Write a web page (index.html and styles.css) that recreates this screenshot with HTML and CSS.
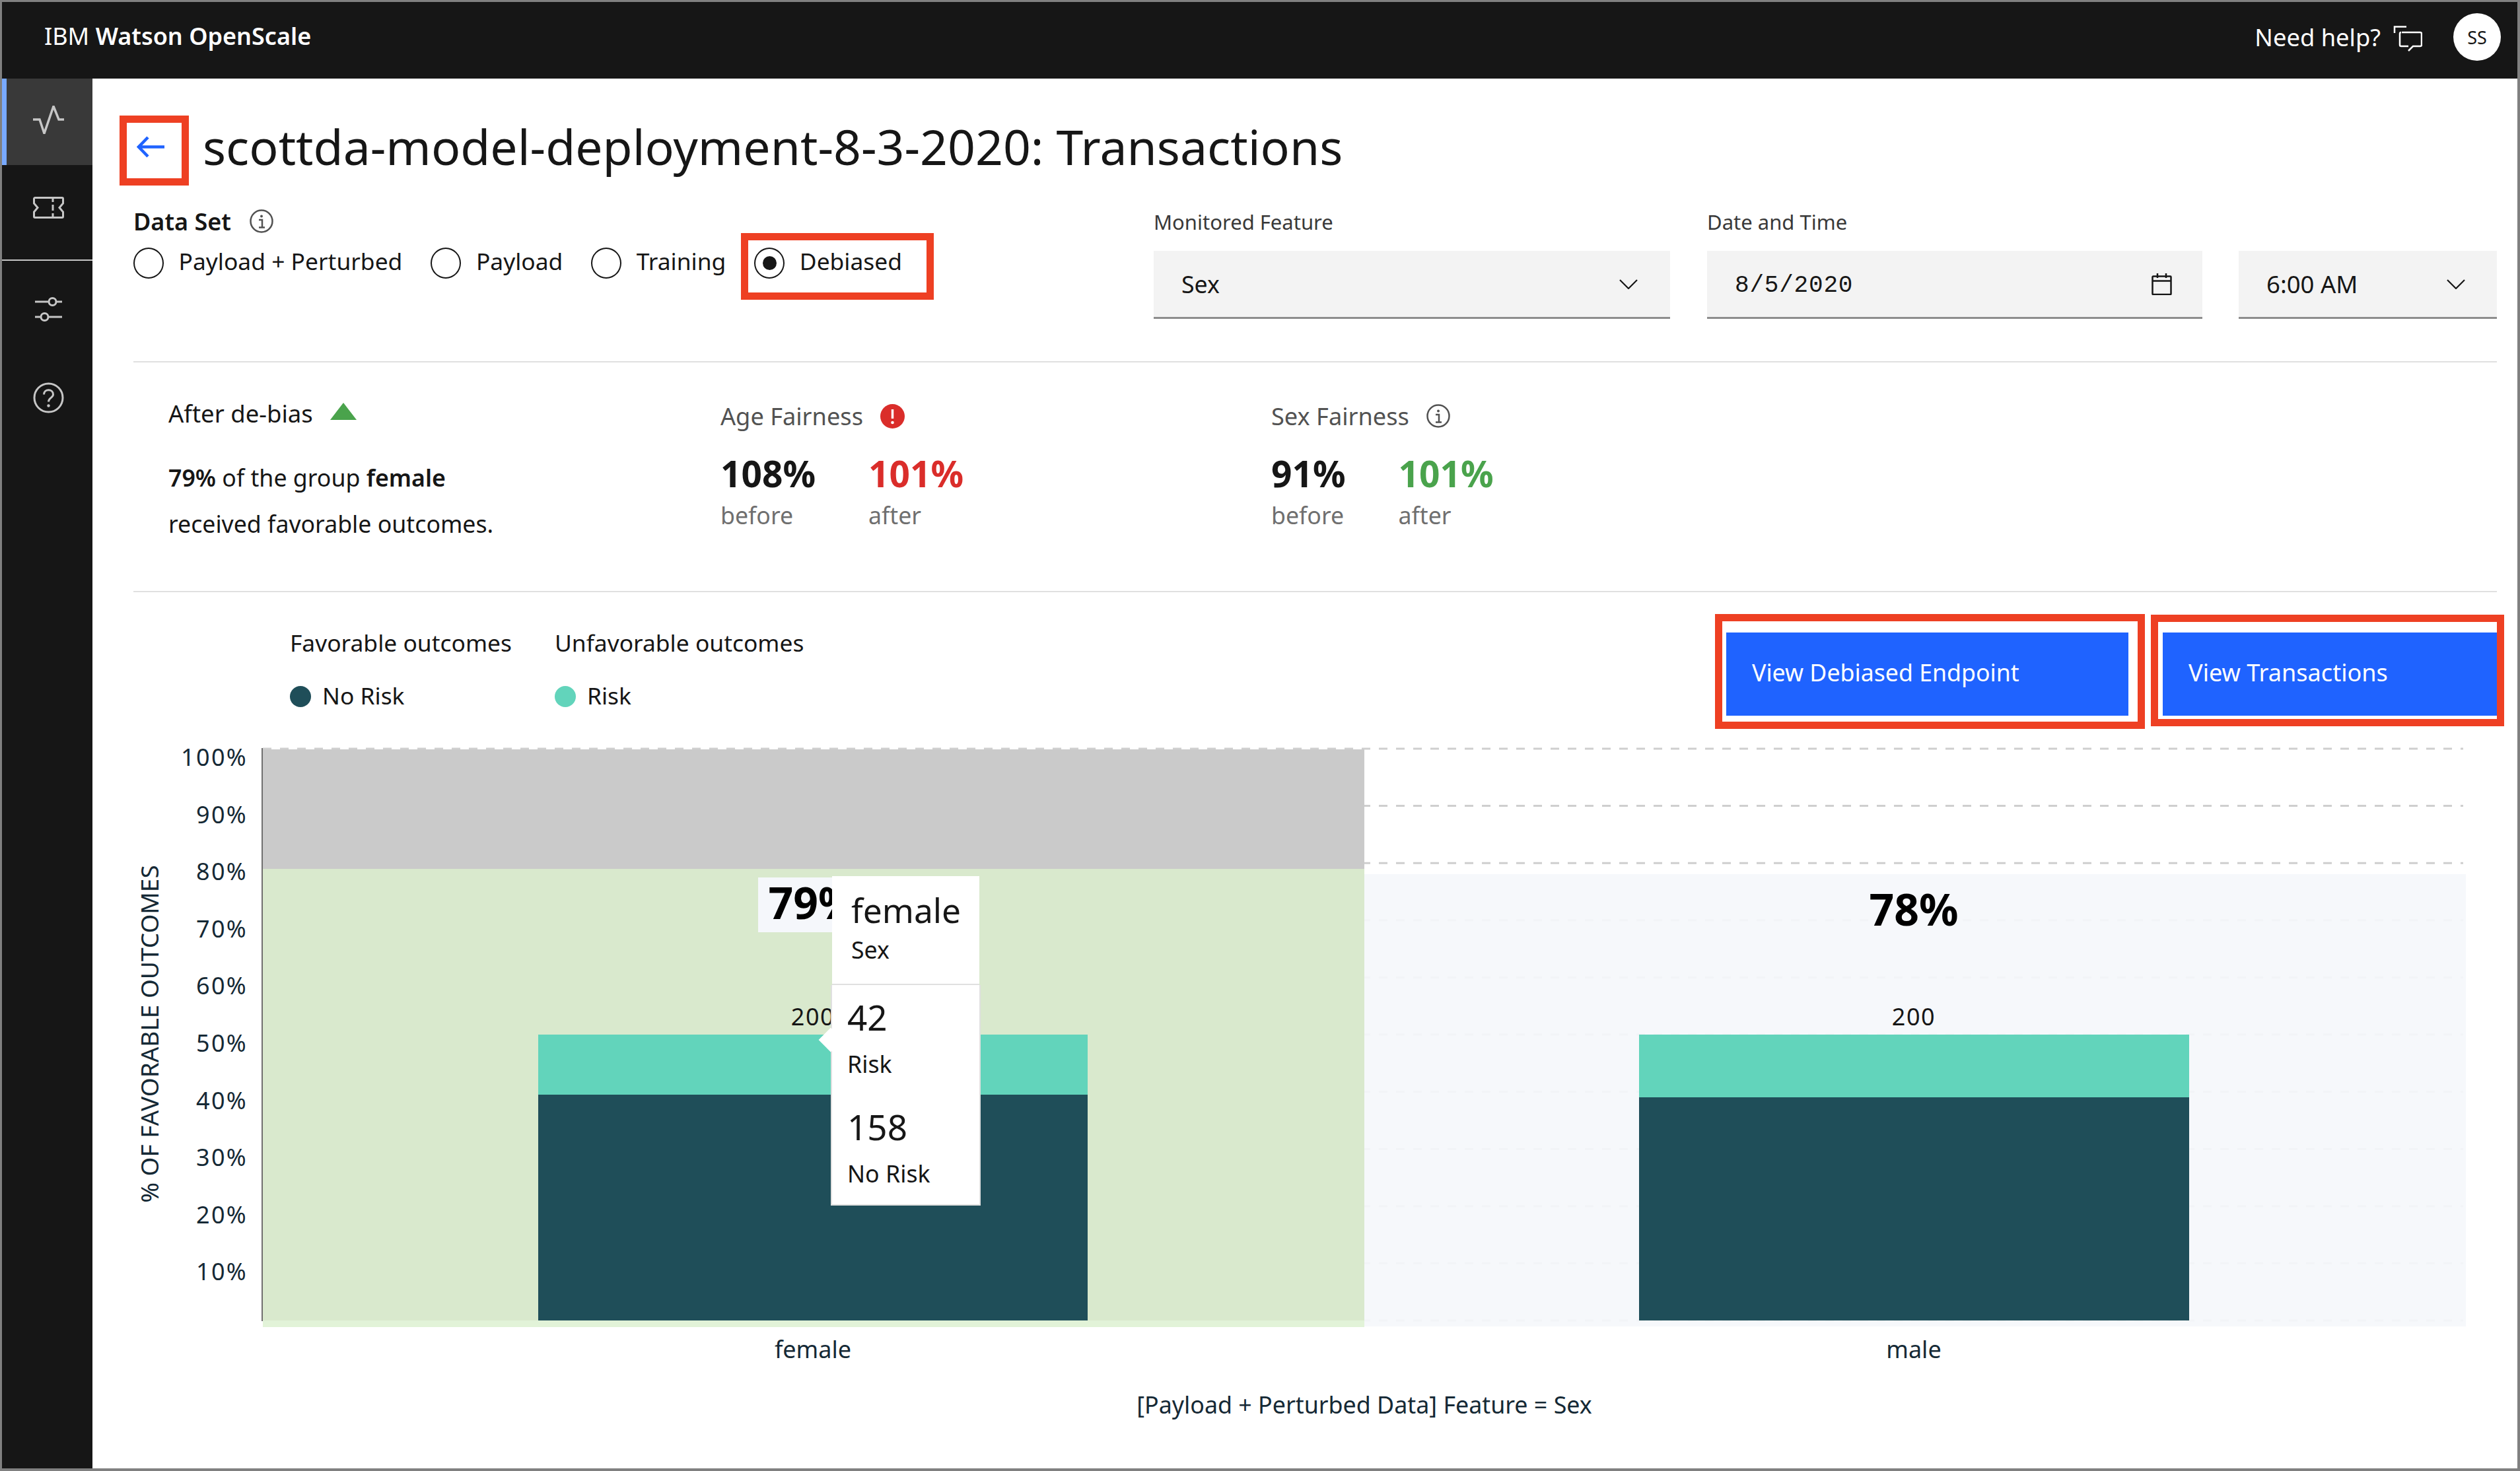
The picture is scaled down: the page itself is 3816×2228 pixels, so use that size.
FILE: index.html
```html
<!DOCTYPE html>
<html lang="en">
<head>
<meta charset="utf-8">
<title>IBM Watson OpenScale</title>
<link rel="stylesheet" href="styles.css">
</head>
<body>
<div class="frame">
  <header class="topbar">
    <div class="brand">IBM <b>Watson OpenScale</b></div>
    <div class="top-right">
      <span class="help-text">Need help?</span>
      <svg class="chat-icon" viewBox="0 0 44 40" width="44" height="40"><path d="M2 12V2.500H20M13 11H41a2 2 0 0 1 2 2V30a2 2 0 0 1-2 2H30L23 39M23 32H12a2 2 0 0 1-2-2V13a2 2 0 0 1 2-2" fill="none" stroke="#fff" stroke-width="2.500"/></svg>
      <span class="avatar">SS</span>
    </div>
  </header>
  <div class="body-row">
    <nav class="sidebar">
      <div class="nav-item nav-active">
        <svg viewBox="0 0 47 43" width="47" height="43"><path d="M0 21H10L17 42L31 1L39 21H47" fill="none" stroke="#c6c6c6" stroke-width="3.500"/></svg>
      </div>
      <div class="nav-item nav-ticket">
        <svg viewBox="0 0 47 33" width="47" height="33"><path d="M3 1.500H44a1.500 1.500 0 0 1 1.500 1.500V10L40 16.500L45.500 23V30a1.500 1.500 0 0 1-1.500 1.500H3A1.500 1.500 0 0 1 1.500 30V23L7 16.500L1.500 10V3A1.500 1.500 0 0 1 3 1.500ZM30 1.500V8M30 12V21M30 25V31.500" fill="none" stroke="#c6c6c6" stroke-width="3"/></svg>
      </div>
      <div class="nav-group">
        <div class="nav-item nav-plain">
          <svg viewBox="0 0 41 37" width="41" height="37"><path d="M0 7H41M0 30H41" stroke="#c6c6c6" stroke-width="3"/><circle cx="26.500" cy="7" r="5.500" fill="#161616" stroke="#c6c6c6" stroke-width="3"/><circle cx="14.500" cy="30" r="5.500" fill="#161616" stroke="#c6c6c6" stroke-width="3"/></svg>
        </div>
        <div class="nav-item nav-plain">
          <svg viewBox="0 0 47 47" width="47" height="47"><circle cx="23.500" cy="23.500" r="21.500" fill="none" stroke="#c6c6c6" stroke-width="3"/><path d="M16.500 18.500c0-9 14-9 14 0c0 5-7 5-7 11" fill="none" stroke="#c6c6c6" stroke-width="3"/><circle cx="23.500" cy="35.500" r="2.200" fill="#c6c6c6"/></svg>
        </div>
      </div>
    </nav>
    <main class="main">
      <div class="title-row">
        <button class="back" aria-label="Back">
          <svg viewBox="0 0 42 33" width="42" height="33"><path d="M17 2L3 16.500L17 31M3 16.500H42" fill="none" stroke="#1f63ff" stroke-width="4.500"/></svg>
        </button>
        <h1 class="title">scottda-model-deployment-8-3-2020: Transactions</h1>
      </div>

      <section class="filters">
        <div class="dataset">
          <div class="dataset-label"><b>Data Set</b>
            <svg class="info" viewBox="0 0 36 36" width="36" height="36"><circle cx="18" cy="18" r="16.500" fill="none" stroke="#525252" stroke-width="2.500"/><path d="M14 16H19V27M14 27.500H23" fill="none" stroke="#525252" stroke-width="2.500"/><circle cx="18" cy="10.500" r="2" fill="#525252"/></svg>
          </div>
          <div class="radios">
            <label class="radio"><span class="radio-dot"></span><span class="radio-text">Payload + Perturbed</span></label>
            <label class="radio"><span class="radio-dot"></span><span class="radio-text">Payload</span></label>
            <label class="radio"><span class="radio-dot"></span><span class="radio-text">Training</span></label>
            <label class="radio"><span class="radio-dot radio-on"></span><span class="radio-text">Debiased</span></label>
          </div>
        </div>
        <div class="field field-feature">
          <div class="field-label">Monitored Feature</div>
          <div class="field-box field-feature-box"><span>Sex</span>
            <svg viewBox="0 0 28 15" width="28" height="15"><path d="M1 1L14 14L27 1" fill="none" stroke="#161616" stroke-width="2.200"/></svg>
          </div>
        </div>
        <div class="field field-date">
          <div class="field-label">Date and Time</div>
          <div class="field-box field-date-box"><span class="mono">8/5/2020</span>
            <svg viewBox="0 0 31 33" width="31" height="33"><path d="M2.500 4.500H28.500a1 1 0 0 1 1 1V31a1 1 0 0 1-1 1H2.500a1 1 0 0 1-1-1V5.500a1 1 0 0 1 1-1ZM1.500 11.500H29.500M9 0V7M22 0V7" fill="none" stroke="#161616" stroke-width="2.500"/></svg>
          </div>
        </div>
        <div class="field field-time">
          <div class="field-label">&nbsp;</div>
          <div class="field-box field-time-box"><span>6:00 AM</span>
            <svg viewBox="0 0 28 15" width="28" height="15"><path d="M1 1L14 14L27 1" fill="none" stroke="#161616" stroke-width="2.200"/></svg>
          </div>
        </div>
      </section>

      <section class="stats">
        <div class="stat stat-summary">
          <div class="summary-head">After de-bias <span class="tri-up"></span></div>
          <p class="summary-text"><b>79%</b> of the group <b>female</b><br>received favorable outcomes.</p>
        </div>
        <div class="stat">
          <div class="stat-head">Age Fairness
            <svg viewBox="0 0 37 37" width="37" height="37"><circle cx="18.500" cy="18.500" r="18.500" fill="#da2d2a"/><path d="M18.500 8V22" stroke="#fff" stroke-width="3.500"/><circle cx="18.500" cy="28" r="2.300" fill="#fff"/></svg>
          </div>
          <div class="vals">
            <div class="val"><strong>108%</strong><span>before</span></div>
            <div class="val"><strong class="bad">101%</strong><span>after</span></div>
          </div>
        </div>
        <div class="stat">
          <div class="stat-head">Sex Fairness
            <svg class="info" viewBox="0 0 36 36" width="36" height="36"><circle cx="18" cy="18" r="16.500" fill="none" stroke="#525252" stroke-width="2.500"/><path d="M14 16H19V27M14 27.500H23" fill="none" stroke="#525252" stroke-width="2.500"/><circle cx="18" cy="10.500" r="2" fill="#525252"/></svg>
          </div>
          <div class="vals">
            <div class="val"><strong>91%</strong><span>before</span></div>
            <div class="val"><strong class="good">101%</strong><span>after</span></div>
          </div>
        </div>
      </section>

      <section class="chart">
        <div class="chart-top">
          <div class="legend">
            <div class="legend-col">
              <div class="legend-title">Favorable outcomes</div>
              <div class="legend-item"><span class="swatch swatch-dark"></span>No Risk</div>
            </div>
            <div class="legend-col">
              <div class="legend-title">Unfavorable outcomes</div>
              <div class="legend-item"><span class="swatch swatch-teal"></span>Risk</div>
            </div>
          </div>
          <div class="actions">
            <button class="btn btn-a">View Debiased Endpoint</button>
            <button class="btn btn-b">View Transactions</button>
          </div>
        </div>
        <svg class="plot" viewBox="182 1120 3599 1040" width="3599" height="1040">
          <g class="grid">
            <line x1="398" x2="3730" y1="1134" y2="1134"/>
            <line x1="398" x2="3730" y1="1220.600" y2="1220.600"/>
            <line x1="398" x2="3730" y1="1307.200" y2="1307.200"/>
            <line x1="398" x2="3730" y1="1393.800" y2="1393.800"/>
            <line x1="398" x2="3730" y1="1480.400" y2="1480.400"/>
            <line x1="398" x2="3730" y1="1567" y2="1567"/>
            <line x1="398" x2="3730" y1="1653.600" y2="1653.600"/>
            <line x1="398" x2="3730" y1="1740.200" y2="1740.200"/>
            <line x1="398" x2="3730" y1="1826.800" y2="1826.800"/>
            <line x1="398" x2="3730" y1="1913.400" y2="1913.400"/>
            <line x1="398" x2="3730" y1="2000" y2="2000"/>
          </g>
          <rect class="zone-male" x="2066" y="1324" width="1668" height="685"/>
          <rect class="zone-grey" x="398" y="1135" width="1668" height="181"/>
          <rect class="zone-green" x="398" y="1316" width="1668" height="684"/>
          <rect class="zone-green-foot" x="398" y="2000" width="1668" height="10"/>
          <line class="axis" x1="397" x2="397" y1="1133" y2="2001"/>
          <rect class="bar-teal" x="815" y="1567" width="832" height="91"/>
          <rect class="bar-dark" x="815" y="1658" width="832" height="342"/>
          <rect class="bar-teal" x="2482" y="1567" width="833" height="95"/>
          <rect class="bar-dark" x="2482" y="1662" width="833" height="338"/>
          <rect class="pct-bg" x="1148" y="1329" width="166" height="83"/>
          <text class="pct" x="1231" y="1392">79%</text>
          <text class="pct" x="2898" y="1402">78%</text>
          <text class="count" x="1231" y="1553">200</text>
          <text class="count" x="2898" y="1553">200</text>
          <g class="ticks">
            <text x="375" y="1160">100%</text>
            <text x="375" y="1246.600">90%</text>
            <text x="375" y="1333.200">80%</text>
            <text x="375" y="1419.800">70%</text>
            <text x="375" y="1506.400">60%</text>
            <text x="375" y="1593">50%</text>
            <text x="375" y="1679.600">40%</text>
            <text x="375" y="1766.200">30%</text>
            <text x="375" y="1852.800">20%</text>
            <text x="375" y="1939.400">10%</text>
          </g>
          <text class="y-title" transform="translate(240 1566) rotate(-90)">% OF FAVORABLE OUTCOMES</text>
          <text class="x-tick" x="1231" y="2057">female</text>
          <text class="x-tick" x="2898" y="2057">male</text>
          <text class="x-title" x="2066" y="2141">[Payload + Perturbed Data] Feature = Sex</text>
        </svg>
        <div class="tooltip">
          <div class="tip-head">
            <div class="tip-title">female</div>
            <div class="tip-sub">Sex</div>
          </div>
          <div class="tip-body">
            <div class="tip-num">42</div>
            <div class="tip-lab">Risk</div>
            <div class="tip-num tip-num-b">158</div>
            <div class="tip-lab">No Risk</div>
          </div>
        </div>
      </section>

      <div class="mark mark-back"></div>
      <div class="mark mark-radio"></div>
      <div class="mark mark-btn-a"></div>
      <div class="mark mark-btn-b"></div>
    </main>
  </div>
</div>
</body>
</html>
```
FILE: styles.css
```css
* { box-sizing: border-box; }
html, body { margin: 0; padding: 0; }
body {
  width: 3816px;
  height: 2228px;
  overflow: hidden;
  font-family: "Noto Sans", "Liberation Sans", sans-serif;
  font-size: 35.700px;
  color: #161616;
  background: #fff;
}
.frame {
  width: 3816px;
  height: 2228px;
  border: solid #808080;
  border-width: 3px 4px 4px 3px;
  display: flex;
  flex-direction: column;
}
.topbar {
  height: 116px;
  flex: none;
  background: #161616;
  color: #fff;
  display: flex;
  align-items: center;
  justify-content: space-between;
  padding: 0 25px 10px 64px;
}
.brand { font-size: 36px; margin-top: -3px; }
.brand b { font-weight: 600; }
.top-right { display: flex; align-items: center; }
.help-text { font-size: 36.300px; margin-right: 19px; }
.chat-icon { margin: 4px 47px 0 0; }
.avatar {
  width: 72px;
  height: 72px;
  border-radius: 50%;
  background: #fff;
  color: #161616;
  font-size: 27px;
  display: flex;
  align-items: center;
  justify-content: center;
}
.body-row { flex: 1; display: flex; min-height: 0; }
.sidebar { width: 137px; flex: none; background: #161616; display: flex; flex-direction: column; }
.nav-item { display: flex; align-items: center; justify-content: center; padding-left: 4px; }
.nav-active { height: 131px; background: #393939; border-left: 7px solid #78a9ff; padding: 0 7px 6px 4px; }
.nav-ticket { height: 145px; padding-bottom: 15px; border-bottom: 2px solid #c6c6c6; }
.nav-group { padding-top: 6px; }
.nav-plain { height: 134px; }

.main { flex: 1; position: relative; padding: 0 31px 0 62px; min-width: 0; }
.title-row { display: flex; align-items: center; padding-top: 5px; height: 201px; }
.back { width: 105px; padding: 0 0 0 5px; border: 0; background: none; display: flex; align-items: center; }
.title { margin: 0; font-size: 73.300px; font-weight: 400; line-height: 80px; }

.filters { display: flex; height: 229px; border-bottom: 2px solid #e0e0e0; }
.dataset { width: 1545px; flex: none; }
.dataset-label { display: flex; align-items: center; gap: 28px; height: 30px; }
.dataset-label b { font-weight: 600; font-size: 36px; }
.radios { display: flex; gap: 43px; margin-top: 25px; font-size: 35.400px; }
.radio { display: flex; align-items: flex-start; gap: 22.500px; line-height: 46px; }
.radio-text { margin-top: -3px; }
.radio-dot { width: 46px; height: 47px; border: 2px solid #161616; border-radius: 50%; display: flex; align-items: center; justify-content: center; }
.radio-on::after { content: ""; width: 21px; height: 21px; border-radius: 50%; background: #161616; }
.field-label { font-size: 31px; color: #393939; line-height: 32px; height: 34px; margin-bottom: 26px; }
.field-box { height: 103px; background: #f3f3f3; border-bottom: 3px solid #8d8d8d; display: flex; align-items: center; justify-content: space-between; padding: 0 44px 0 42px; }
.field-feature { width: 782px; flex: none; margin-right: 56px; }
.field-feature-box { padding-right: 49px; }
.field-date { width: 750px; flex: none; margin-right: 55px; }
.field-time { flex: 1; }
.field-date-box { padding-right: 46px; }
.field-time-box { padding-right: 48px; font-size: 36.500px; }
.mono { font-family: "Liberation Mono", monospace; font-size: 36px; letter-spacing: 0.800px; padding-top: 5px; }

.stats { display: flex; height: 348px; padding-left: 53px; border-bottom: 2px solid #e0e0e0; }
.stat { width: 834px; flex: none; padding-top: 61px; }
.stat-summary { width: 836px; padding-top: 57px; }
.summary-head { display: flex; align-items: center; gap: 26px; line-height: 40px; height: 40px; font-size: 36.500px; }
.tri-up { width: 0; height: 0; border-left: 20px solid transparent; border-right: 20px solid transparent; border-bottom: 26px solid #4aa34c; margin-top: -6px; }
.summary-text { margin: 42px 0 0; line-height: 70px; }
.summary-text b { font-weight: 600; }
.stat-head { display: flex; align-items: center; gap: 26px; line-height: 40px; height: 40px; color: #525252; font-size: 36.200px; }
.vals { display: flex; gap: 80px; margin-top: 37px; }
.val { display: flex; flex-direction: column; }
.val strong { font-size: 55px; line-height: 60px; font-weight: 700; }
.val span { color: #6f6f6f; line-height: 40px; margin-top: 13px; }
.bad { color: #da2d2a; }
.good { color: #4aa34c; }

.chart { position: relative; }
.chart-top { display: flex; justify-content: space-between; height: 223px; }
.legend { display: flex; gap: 65px; padding: 56px 0 0 237px; font-size: 35.400px; }
.legend-title { line-height: 40px; height: 40px; }
.legend-item { display: flex; align-items: center; gap: 17px; line-height: 40px; height: 40px; margin-top: 40px; }
.swatch { width: 32px; height: 32px; border-radius: 50%; display: block; margin-top: 4px; }
.swatch-dark { background: #1f4e59; }
.swatch-teal { background: #62d4bb; }
.actions { display: flex; gap: 52px; padding-top: 61px; align-items: flex-start; }
.btn { height: 126px; border: 0; background: #1f63ff; color: #fff; font: inherit; text-align: left; padding: 0 0 6px 39px; }
.btn-a { width: 609px; }
.btn-b { width: 506px; font-size: 36.100px; }
.plot { display: block; margin-left: -20px; }

.grid line { stroke: #cfcfcf; stroke-width: 3; stroke-dasharray: 13 13; }
.zone-male { fill: #f5f7fb; fill-opacity: 0.9; }
.zone-grey { fill: #cacaca; }
.zone-green { fill: #d9e9cd; }
.zone-green-foot { fill: #e2f3d8; }
.axis { stroke: #6f6f6f; stroke-width: 2; }
.bar-teal { fill: #62d4bb; }
.bar-dark { fill: #1f4e59; }
.pct-bg { fill: #f5f7fb; }
.pct { font-size: 66px; font-weight: 700; text-anchor: middle; fill: #000; }
.count { font-size: 36px; letter-spacing: 1.500px; text-anchor: middle; fill: #161616; }
.ticks text { font-size: 36px; letter-spacing: 2.300px; text-anchor: end; fill: #152935; }
.y-title { font-size: 37px; text-anchor: middle; fill: #152935; }
.x-tick { font-size: 36px; text-anchor: middle; fill: #152935; }
.x-title { font-size: 35.800px; text-anchor: middle; fill: #152935; }

.tooltip { position: absolute; left: 1056px; top: 430px; width: 227px; }
.tip-head { margin: 0 2px; height: 165px; padding: 20px 0 0 29px; background: #fff; border-bottom: 2px solid #e0e0e0; }
.tip-title { font-size: 51.500px; line-height: 62px; }
.tip-sub { font-size: 35.700px; line-height: 40px; margin-top: 9px; }
.tip-body { position: relative; height: 334px; padding: 19px 0 0 23px; background: #fff; border: 2px solid #e0e0e0; border-top: 0; }
.tip-body::before { content: ""; position: absolute; left: -15px; top: 70px; width: 26px; height: 26px; background: #fff; transform: rotate(45deg); }
.tip-num { font-size: 53px; line-height: 60px; }
.tip-num-b { margin-top: 46px; }
.tip-lab { font-size: 35.700px; line-height: 40px; margin-top: 20px; }

.mark { position: absolute; border: 11px solid #ee4023; pointer-events: none; }
.mark-back { left: 41px; top: 56px; width: 105px; height: 106px; }
.mark-radio { left: 982px; top: 234px; width: 292px; height: 101px; }
.mark-btn-a { left: 2457px; top: 811px; width: 651px; height: 174px; }
.mark-btn-b { left: 3117px; top: 812px; width: 535px; height: 169px; }
```
